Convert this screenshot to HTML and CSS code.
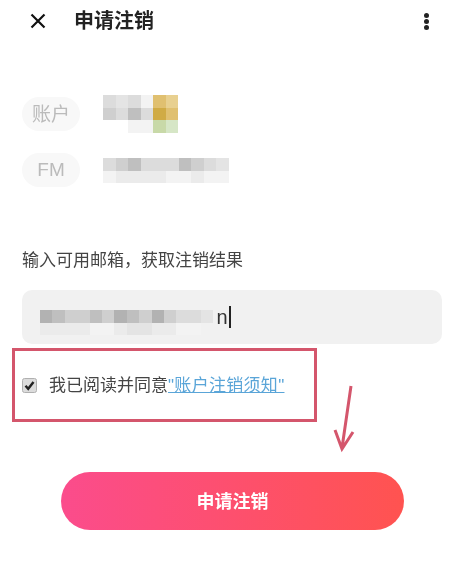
FILE: index.html
```html
<!DOCTYPE html>
<html lang="zh-CN">
<head>
    <meta charset="UTF-8">
    <meta name="viewport" content="width=device-width, initial-scale=1.0">
    <title>申请注销</title>
    <link rel="stylesheet" href="styles.css">
</head>
<body>
    <div class="topbar">
        <svg class="close-icon" width="16" height="16" viewBox="0 0 16 16">
            <path d="M1.5 1.5 L14.5 14.5 M14.5 1.5 L1.5 14.5" />
        </svg>
        <h1 class="title">申请注销</h1>
        <div class="more">
            <span></span>
            <span></span>
            <span></span>
        </div>
    </div>

    <div class="content">
        <div class="info-row">
            <span class="pill">账户</span>
            <div class="mosaic mosaic-account">
                <i class="g2"></i><i class="g3"></i><i class="g2"></i><i class="g5"></i><i class="y2"></i><i class="y3"></i>
                <i class="g1"></i><i class="g2"></i><i class="g0"></i><i class="g2"></i><i class="y1"></i><i class="y2"></i>
                <i></i><i></i><i class="g5"></i><i class="g5"></i><i class="v1"></i><i class="v2"></i>
            </div>
        </div>
        <div class="info-row">
            <span class="pill pill-latin">FM</span>
            <div class="mosaic mosaic-fm">
                <i class="g2"></i><i class="g1"></i><i class="g0"></i><i class="g2"></i><i class="g2"></i><i class="g2"></i><i class="g0"></i><i class="g1"></i><i class="g2"></i><i class="g3"></i>
                <i class="g5"></i><i class="g4"></i><i class="g4"></i><i class="g4"></i><i class="g4"></i><i class="g5"></i><i class="g5"></i><i class="g4"></i><i class="g5"></i><i class="g5"></i>
            </div>
        </div>

        <p class="hint">输入可用邮箱，获取注销结果</p>

        <div class="email-box">
            <div class="mosaic mosaic-email">
                <i class="dark"></i><i class="g0"></i><i class="g1"></i><i class="g1"></i><i class="g0"></i><i class="g1"></i><i class="dark"></i><i class="g0"></i><i class="g1"></i><i class="dark"></i><i class="g1"></i><i class="g2"></i><i class="g2"></i><i class="g3"></i>
                <i class="g4"></i><i class="g4"></i><i class="g4"></i><i class="g4"></i><i class="g5"></i><i class="g5"></i><i class="g4"></i><i class="g3"></i><i class="g3"></i><i class="g4"></i><i class="g4"></i><i class="g5"></i><i class="g5"></i><i></i>
            </div>
            <span class="email-end">n</span>
            <span class="cursor"></span>
        </div>

        <div class="agree">
            <svg class="check" width="15" height="15" viewBox="0 0 15 15">
                <rect x="0.5" y="0.5" width="14" height="14" rx="2" fill="#dcdcdc" stroke="#b0b0b0" />
                <path d="M3.5 7.8 L6.2 10.8 L11.5 4" fill="none" stroke="#222" stroke-width="2.4" />
            </svg>
            <span class="agree-text">我已阅读并同意<a class="agree-link" href="#">"账户注销须知"</a></span>
        </div>

        <button class="submit">申请注销</button>
    </div>

    <!-- annotations drawn over the screenshot -->
    <div class="mark-box"></div>
    <svg class="mark-arrow" width="30" height="70" viewBox="0 0 30 70">
        <path d="M21 1 L12 63 M5 45 L12 64 L23 47" />
    </svg>
</body>
</html>
```

FILE: styles.css
```css
* {
  margin: 0;
  padding: 0;
  box-sizing: border-box;
}

body {
  position: relative;
  height: 579px;
  overflow: hidden;
  background-color: white;
  font-family: "Noto Sans CJK SC", "Liberation Sans", sans-serif;
  filter: blur(0.4px);
}

/* Top bar */
.topbar {
  display: flex;
  align-items: center;
  height: 42px;
  padding: 0 30px;
}

.close-icon {
  flex: none;
}

.close-icon path {
  fill: none;
  stroke: #111;
  stroke-width: 2.2;
}

.title {
  margin-left: 28px;
  padding-bottom: 2px;
  font-size: 20px;
  line-height: 28px;
  font-weight: 700;
  color: #222;
}

.more {
  display: flex;
  flex-direction: column;
  gap: 1px;
  margin-left: auto;
}

.more span {
  width: 5px;
  height: 5px;
  border-radius: 50%;
  background-color: #222;
}

/* Account rows */
.content {
  padding: 55px 17px 0 22px;
}

.info-row {
  display: flex;
  align-items: center;
  height: 34px;
  margin-bottom: 22px;
}

.pill {
  width: 58px;
  height: 34px;
  border-radius: 17px;
  background-color: #f8f8f8;
  color: #bbbbbb;
  font-size: 19px;
  line-height: 31px;
  text-align: center;
}

.pill-latin {
  font-family: "Liberation Sans", sans-serif;
  font-size: 19px;
  line-height: 33px;
}

/* Pixelated blocks hiding the private values */
.mosaic {
  display: grid;
  grid-auto-rows: 12.5px;
  filter: blur(0.5px);
}

.mosaic-account {
  grid-template-columns: repeat(6, 12.5px);
  margin-left: 23px;
}

.mosaic-fm {
  grid-template-columns: repeat(10, 12.6px);
  margin-left: 23px;
  margin-top: 1px;
}

.mosaic-email {
  grid-template-columns: repeat(14, 12.4px);
  margin-top: 11px;
}

.g0 { background-color: #bfbfbf; }
.g1 { background-color: #cfcfcf; }
.g2 { background-color: #dcdcdc; }
.g3 { background-color: #e4e4e4; }
.g4 { background-color: #ebebeb; }
.g5 { background-color: #f3f3f3; }
.dark { background-color: #b2b2b2; }
.y1 { background-color: #d0ab45; }
.y2 { background-color: #e0c070; }
.y3 { background-color: #e8d090; }
.v1 { background-color: #c8d9a8; }
.v2 { background-color: #d6e6c6; }

/* Email */
.hint {
  margin-top: 60px;
  font-size: 17px;
  line-height: 24px;
  color: #444;
}

.email-box {
  display: flex;
  align-items: center;
  height: 54px;
  margin-top: 19px;
  padding-left: 18px;
  border-radius: 10px;
  background-color: #f1f1f1;
}

.email-end {
  margin-left: 3px;
  font-family: "Liberation Sans", sans-serif;
  font-size: 20px;
  color: #333;
}

.cursor {
  width: 2px;
  height: 22px;
  margin-left: 1px;
  background-color: #222;
}

/* Agreement */
.agree {
  display: flex;
  align-items: center;
  height: 24px;
  margin-top: 29px;
}

.check {
  flex: none;
}

.agree-text {
  margin-left: 12px;
  font-size: 17px;
  line-height: 24px;
  color: #444;
}

.agree-link {
  font-family: "Liberation Sans", "Noto Sans CJK SC", sans-serif;
  letter-spacing: 0.3px;
  color: #5aa5d8;
}

/* Submit */
.submit {
  display: block;
  width: 343px;
  height: 58px;
  margin-top: 75px;
  margin-left: 39px;
  padding-bottom: 2px;
  border: 0;
  border-radius: 29px;
  background: linear-gradient(90deg, #fb4c8c, #ff5350);
  color: white;
  font-family: inherit;
  font-size: 18px;
  font-weight: 700;
}

/* Red annotations */
.mark-box {
  position: absolute;
  left: 12px;
  top: 348px;
  width: 305px;
  height: 74px;
  border: 3px solid #d4566c;
}

.mark-arrow {
  position: absolute;
  left: 330px;
  top: 385px;
}

.mark-arrow path {
  fill: none;
  stroke: #d4566c;
  stroke-width: 3;
}
```
